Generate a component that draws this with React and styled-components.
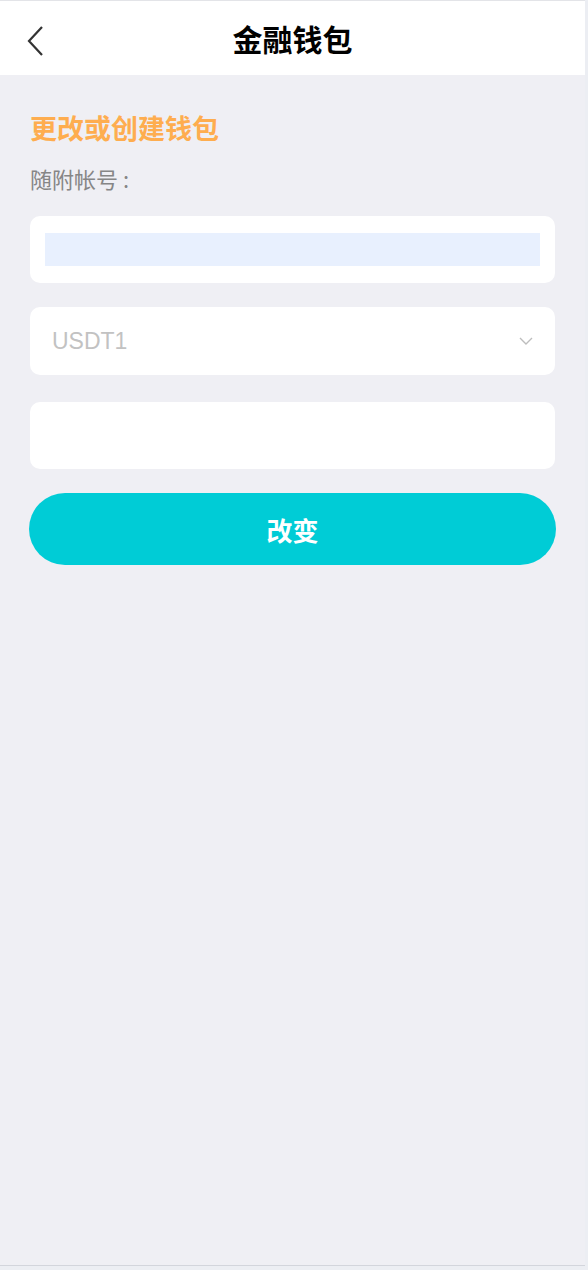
import React from "react";
import styled, { createGlobalStyle } from "styled-components";

const GlobalStyle = createGlobalStyle`
    html, body {
        margin: 0;
        padding: 0;
        background: #eceef3;
    }
    * {
        box-sizing: border-box;
    }
`;

const Page = styled.div`
    width: 585px;
    height: 1266px;
    background-color: #efeff4;
    border-top: 1px solid #e3e4e8;
    border-bottom: 1px solid #d3d5dc;
    font-family: "Liberation Sans", "Noto Sans CJK SC", sans-serif;
    display: flex;
    flex-direction: column;
`;

const Header = styled.header`
    height: 74px;
    background: #ffffff;
    display: flex;
    align-items: center;
    justify-content: center;
    position: relative;
`;

const BackButton = styled.button`
    position: absolute;
    left: 22px;
    top: 21px;
    width: 26px;
    height: 38px;
    padding: 0;
    border: none;
    background: none;
    cursor: pointer;
    display: flex;
    align-items: center;
    justify-content: center;
`;

const Title = styled.h1`
    margin: 0;
    font-family: "Noto Sans CJK SC", sans-serif;
    font-size: 30px;
    font-weight: 700;
    color: #000;
    line-height: 40px;
`;

const Content = styled.main`
    padding: 35px 30px 0;
    display: flex;
    flex-direction: column;
`;

const SectionTitle = styled.h2`
    margin: 0;
    font-family: "Noto Sans CJK SC", sans-serif;
    font-size: 27px;
    font-weight: 700;
    color: #fead4f;
    line-height: 36px;
`;

const Label = styled.div`
    margin-top: 16px;
    font-family: "Noto Sans CJK SC", sans-serif;
    font-size: 22px;
    color: #868686;
    line-height: 32px;
`;

const Card = styled.div`
    margin-top: ${(p) => p.gap}px;
    height: ${(p) => p.h}px;
    background: #ffffff;
    border-radius: 10px;
    display: flex;
    align-items: center;
    padding: 0 ${(p) => p.pad || 15}px;
`;

const Field = styled.input`
    width: 100%;
    height: 33px;
    border: none;
    outline: none;
    padding: 0 4px;
    font-size: 20px;
    font-family: "Liberation Sans", sans-serif;
    background: ${(p) => (p.autofill ? "#e8f0fe" : "transparent")};
`;

const SelectText = styled.span`
    flex: 1;
    font-size: 23px;
    color: #c2c2c2;
`;

const SubmitButton = styled.button`
    margin: 24px -1px 0;
    height: 72px;
    border: none;
    border-radius: 36px;
    background: #00ccd6;
    color: #ffffff;
    font-family: "Noto Sans CJK SC", sans-serif;
    font-size: 26px;
    font-weight: 700;
    cursor: pointer;
`;

const App = () => {
    return (
        <>
            <GlobalStyle />
            <Page>
                <Header>
                    <BackButton aria-label="back">
                        <svg width="18" height="32" viewBox="0 0 18 32">
                            <path d="M16 2 L3 16 L16 30" fill="none" stroke="#333" strokeWidth="2.2" />
                        </svg>
                    </BackButton>
                    <Title>金融钱包</Title>
                </Header>
                <Content>
                    <SectionTitle>更改或创建钱包</SectionTitle>
                    <Label>随附帐号 :</Label>
                    <Card gap={22} h={67}>
                        <Field autofill readOnly value="" />
                    </Card>
                    <Card gap={24} h={68} pad={22}>
                        <SelectText>USDT1</SelectText>
                        <svg width="14" height="8" viewBox="0 0 14 8">
                            <path d="M1 1 L7 7 L13 1" fill="none" stroke="#bdbdbd" strokeWidth="1.4" />
                        </svg>
                    </Card>
                    <Card gap={27} h={67}>
                        <Field readOnly value="" />
                    </Card>
                    <SubmitButton>改变</SubmitButton>
                </Content>
            </Page>
        </>
    );
};

export default App;
